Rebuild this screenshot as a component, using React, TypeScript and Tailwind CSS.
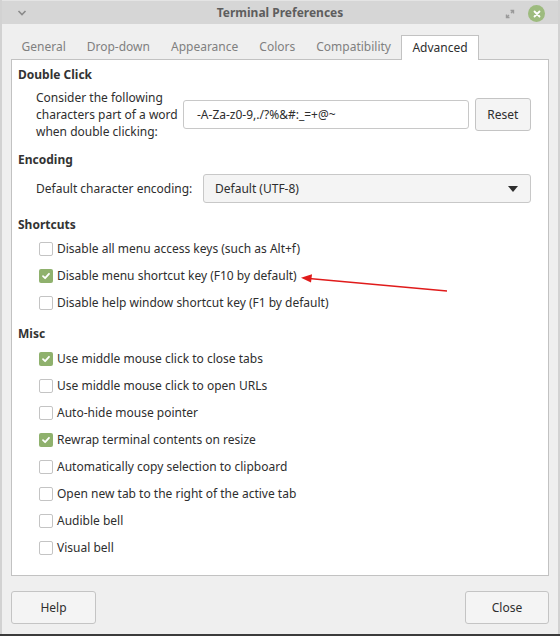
import React from 'react';

const tabs = ['General', 'Drop-down', 'Appearance', 'Colors', 'Compatibility', 'Advanced'];

const shortcuts = [
  { label: 'Disable all menu access keys (such as Alt+f)', checked: false },
  { label: 'Disable menu shortcut key (F10 by default)', checked: true },
  { label: 'Disable help window shortcut key (F1 by default)', checked: false },
];

const misc = [
  { label: 'Use middle mouse click to close tabs', checked: true },
  { label: 'Use middle mouse click to open URLs', checked: false },
  { label: 'Auto-hide mouse pointer', checked: false },
  { label: 'Rewrap terminal contents on resize', checked: true },
  { label: 'Automatically copy selection to clipboard', checked: false },
  { label: 'Open new tab to the right of the active tab', checked: false },
  { label: 'Audible bell', checked: false },
  { label: 'Visual bell', checked: false },
];

function CheckRow({ label, checked }: { label: string; checked: boolean }) {
  return (
    <div className="flex h-[27px] items-center pl-[21px]">
      {checked ? (
        <span className="flex h-[14px] w-[14px] items-center justify-center rounded-[2px] bg-[#8fb16d]">
          <svg width="10" height="10" viewBox="0 0 10 10">
            <path d="M2 5.2 L4.1 7.2 L8 2.8" fill="none" stroke="#fff" strokeWidth="1.8" strokeLinecap="round" strokeLinejoin="round" />
          </svg>
        </span>
      ) : (
        <span className="h-[14px] w-[14px] rounded-[2px] border border-[#c4c4c4] bg-white" />
      )}
      <span className="ml-[4px] whitespace-nowrap text-[#2e2e2e]">{label}</span>
    </div>
  );
}

function Heading({ children, className = '' }: { children: React.ReactNode; className?: string }) {
  return <div className={`h-[17px] leading-[17px] font-bold text-[#333] ${className}`}>{children}</div>;
}

export default function App() {
  return (
    <div
      className="relative flex h-[636px] w-[560px] flex-col overflow-hidden bg-[#d2d2d2] text-[12px]"
      style={{ fontFamily: '"Noto Sans", "DejaVu Sans", sans-serif' }}
    >
      <div className="mx-[2px] flex h-[634px] w-[556px] shrink-0 flex-col bg-[#efefef]">
        {/* Title bar */}
        <div className="relative flex h-[24px] shrink-0 items-center justify-center border-t border-[#e4e4e4] bg-[#d6d6d6]">
          <svg className="absolute left-[15px] top-[9px]" width="10" height="6" viewBox="0 0 10 6">
            <path d="M1.5 1 L5 4.5 L8.5 1" fill="none" stroke="#8a8a8a" strokeWidth="1.6" />
          </svg>
          <span className="font-bold text-[#5e5e5e]">Terminal Preferences</span>
          <svg className="absolute left-[503px] top-[8px]" width="10" height="10" viewBox="0 0 10 10">
            <path d="M1.5 8.5 L4 6 M6 4 L8.5 1.5 M1.5 5.5 V8.5 H4.5 M5.5 1.5 H8.5 V4.5" fill="none" stroke="#9a9a9a" strokeWidth="1.4" />
          </svg>
          <span className="absolute left-[526px] top-[4px] flex h-[17px] w-[17px] items-center justify-center rounded-full bg-[#9dbb7e]">
            <svg width="8" height="8" viewBox="0 0 8 8">
              <path d="M1.5 1.5 L6.5 6.5 M6.5 1.5 L1.5 6.5" stroke="#fff" strokeWidth="1.8" strokeLinecap="round" />
            </svg>
          </span>
        </div>

        {/* Tabs */}
        <div className="mt-[10px] flex h-[25px] shrink-0 items-end pl-[9px]">
          {tabs.map((t) =>
            t === 'Advanced' ? (
              <div
                key={t}
                className="relative z-10 -mb-px flex h-[25px] items-center border border-b-0 border-[#c2c2c2] bg-white px-[10px] text-[#2e2e2e]"
              >
                {t}
              </div>
            ) : (
              <div key={t} className="flex h-[24px] items-center px-[10.5px] text-[#808080]">
                {t}
              </div>
            ),
          )}
        </div>

        {/* Panel */}
        <div className="mx-[9px] flex h-[517px] shrink-0 flex-col border border-[#c2c2c2] bg-white px-[6px] pt-[6px]">
          <Heading>Double Click</Heading>
          <div className="mt-[6px] flex items-center pl-[18px] pr-[11px]">
            <div className="w-[147px] shrink-0 whitespace-nowrap leading-[17px] text-[#2e2e2e]">
              Consider the following
              <br />
              characters part of a word
              <br />
              when double clicking:
            </div>
            <div className="flex h-[29px] w-[290px] items-center rounded-[3px] border border-[#c8c8c8] bg-white pl-[13px] text-[#2e2e2e]">
              -A-Za-z0-9,./?%&amp;#:_=+@~
            </div>
            <button className="ml-[6px] h-[33px] w-[57px] rounded-[3px] border border-[#c4c4c4] bg-[#f4f4f4] text-[#2e2e2e]">
              Reset
            </button>
          </div>

          <Heading className="mt-[11px]">Encoding</Heading>
          <div className="mt-[6px] flex items-center pl-[18px] pr-[11px]">
            <span className="w-[167px] shrink-0 whitespace-nowrap text-[#2e2e2e]">Default character encoding:</span>
            <div className="relative flex h-[29px] w-[333px] items-center rounded-[3px] border border-[#c8c8c8] bg-[#f4f4f4] pl-[11px] text-[#2e2e2e]">
              Default (UTF-8)
              <svg className="absolute right-[12px] top-[11px]" width="10" height="6" viewBox="0 0 10 6">
                <path d="M0 0 H10 L5 6 Z" fill="#2e2e2e" />
              </svg>
            </div>
          </div>

          <Heading className="mt-[13px]">Shortcuts</Heading>
          <div className="mt-[2px] flex flex-col">
            {shortcuts.map((s) => (
              <CheckRow key={s.label} {...s} />
            ))}
          </div>

          <Heading className="mt-[9px]">Misc</Heading>
          <div className="mt-[3px] flex flex-col">
            {misc.map((s) => (
              <CheckRow key={s.label} {...s} />
            ))}
          </div>
        </div>

        {/* Footer buttons */}
        <div className="mt-[15px] flex justify-between px-[9px]">
          <button className="h-[33px] w-[85px] rounded-[3px] border border-[#c4c4c4] bg-[#f4f4f4] text-[#2e2e2e]">
            Help
          </button>
          <button className="h-[33px] w-[84px] rounded-[3px] border border-[#c4c4c4] bg-[#f4f4f4] text-[#2e2e2e]">
            Close
          </button>
        </div>
      </div>
      <div className="h-[2px] shrink-0 bg-[#3b3b3b]" />

      {/* Red annotation arrow */}
      <svg className="pointer-events-none absolute left-0 top-0" width="560" height="636" viewBox="0 0 560 636">
        <path d="M447 291 L309 278.5" stroke="#e01b1b" strokeWidth="1.6" fill="none" />
        <path d="M301 277.8 L312 274.2 L311 282.4 Z" fill="#e01b1b" />
      </svg>
    </div>
  );
}
